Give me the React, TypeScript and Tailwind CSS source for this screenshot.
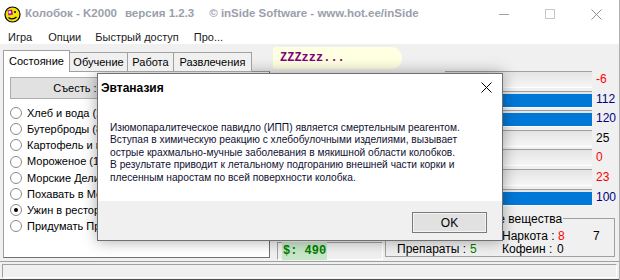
import React from 'react';

const foods = [
  'Хлеб и вода (2$)',
  'Бутерброды (8$)',
  'Картофель и мясо (12$)',
  'Мороженое (15$)',
  'Морские Деликатесы (30$)',
  'Похавать в McDonalds (40$)',
  'Ужин в ресторане (60$)',
  'Придумать Премию (100$)',
];

const stats = [
  { id: 'mood', value: -6, color: 'text-[#ff0000]' },
  { id: 'health', value: 112, color: 'text-[#000080]' },
  { id: 'food', value: 120, color: 'text-[#000080]' },
  { id: 'tired', value: 25, color: 'text-black' },
  { id: 'drunk', value: 0, color: 'text-[#ff0000]' },
  { id: 'fresh', value: 23, color: 'text-[#ff0000]' },
  { id: 'respect', value: 100, color: 'text-[#000080]' },
];

const dialogLines = [
  'Изюмопаралитеческое павидло (ИПП) является смертельным реагентом.',
  'Вступая в химическую реакцию с хлебобулочными изделиями, вызывает',
  'острые крахмально-мучные заболевания в мякишной области колобков.',
  'В результате приводит к летальному подгоранию внешней части корки и',
  'плесенным наростам по всей поверхности колобка.',
];

function KolobokIcon() {
  return (
    <svg width="17" height="17" viewBox="0 0 17 17">
      <circle cx="8.5" cy="8.5" r="7.5" fill="#f2e600" stroke="#000" strokeWidth="1.2" />
      <path d="M3.5 4.5 L8 3.5 L9 8.5 L4.5 9.5 Z" fill="#b0109a" />
      <circle cx="5.8" cy="6.3" r="1.2" fill="#fff" />
      <circle cx="11" cy="6" r="1" fill="#000" />
      <path d="M4.5 11.5 Q8.5 14.5 12.5 11" stroke="#000" strokeWidth="1.3" fill="none" />
    </svg>
  );
}

function Radio({ checked }: { checked?: boolean }) {
  return (
    <span className="w-[12px] h-[12px] rounded-full border border-[#8a8a8a] bg-white flex items-center justify-center shrink-0">
      {checked && <span className="w-[4px] h-[4px] rounded-full bg-black" />}
    </span>
  );
}

export default function App() {
  return (
    <div className="w-[620px] h-[280px] relative overflow-hidden bg-[#f0f0f0] flex flex-col border-r border-[#b0b0b0] font-['Liberation_Sans',Arial,sans-serif] text-black">
      {/* title bar */}
      <div className="h-[28px] bg-white flex items-center shrink-0">
        <div className="ml-[4px]">
          <KolobokIcon />
        </div>
        <div className="ml-[4px] text-[11.5px] font-bold text-[#9aa0ab] whitespace-pre">
          <span>Колобок - K2000</span>
          <span className="ml-[8px]">версия 1.2.3</span>
          <span className="ml-[15px]">© inSide Software - www.hot.ee/inSide</span>
        </div>
        <div className="ml-auto flex items-center h-full">
          <div className="w-[46px] h-full flex items-center justify-center">
            <svg width="10" height="10" viewBox="0 0 10 10"><path d="M0 5.5 H10" stroke="#a0a0a0" strokeWidth="1" /></svg>
          </div>
          <div className="w-[46px] h-full flex items-center justify-center">
            <svg width="10" height="10" viewBox="0 0 10 10"><rect x="0.5" y="0.5" width="9" height="9" fill="none" stroke="#c8c8c8" strokeWidth="1" /></svg>
          </div>
          <div className="w-[46px] h-full flex items-center justify-center">
            <svg width="11" height="11" viewBox="0 0 11 11"><path d="M0.5 0.5 L10.5 10.5 M10.5 0.5 L0.5 10.5" stroke="#909090" strokeWidth="1" /></svg>
          </div>
        </div>
      </div>

      {/* menu */}
      <div className="h-[16px] bg-white flex items-center text-[11px] text-[#1a1a1a] shrink-0 pt-[2px]">
        <span className="ml-[8px]">Игра</span>
        <span className="ml-[16px]">Опции</span>
        <span className="ml-[14px]">Быстрый доступ</span>
        <span className="ml-[15px]">Про...</span>
      </div>

      {/* client */}
      <div className="flex-1 flex min-h-0">
        {/* left column */}
        <div className="ml-[3px] w-[267px] flex flex-col pt-[6px] shrink-0">
          <div className="flex items-end h-[22px] text-[11px] relative z-10">
            <div className="h-[22px] w-[67px] bg-white border border-b-0 border-[#a0a0a0] flex items-center justify-center">
              Состояние
            </div>
            <div className="h-[20px] w-[59px] bg-[#f0f0f0] border border-[#a0a0a0] flex items-center justify-center -ml-px">
              Обучение
            </div>
            <div className="h-[20px] w-[47px] bg-[#f0f0f0] border border-[#a0a0a0] flex items-center justify-center -ml-px">
              Работа
            </div>
            <div className="h-[20px] w-[79px] bg-[#f0f0f0] border border-[#a0a0a0] flex items-center justify-center -ml-px">
              Развлечения
            </div>
          </div>
          <div className="-mt-px h-[187px] bg-white border border-[#a0a0a0] border-r-[#707070] border-b-[#707070] px-[6px] pt-[5px] text-[11px]">
            <div className="h-[22px] border border-[#adadad] bg-[#e1e1e1] flex items-center justify-center">
              Съесть : Ужин в ресторане (60$)
            </div>
            <div className="mt-[6px] flex flex-col">
              {foods.map((f, i) => (
                <div key={f} className="h-[16.2px] flex items-center gap-[5px]">
                  <Radio checked={i === 6} />
                  <span>{f}</span>
                </div>
              ))}
            </div>
          </div>
        </div>

        {/* right column */}
        <div className="ml-[3px] flex-1 flex flex-col pt-[3px] text-[12px]">
          <div className="w-[129px] h-[22px] bg-[#ffffe1] rounded-r-[11px] rounded-l-[3px] flex items-center pl-[7px] font-['Liberation_Mono',monospace] font-bold text-[12px] text-[#800080]">
            ZZZzzz...
          </div>
          <div className="mt-[2px] flex flex-col">
            {stats.map((s) => (
              <div key={s.id} className="h-[19.6px] flex items-start">
                <span className="w-[172px]" />
                <div className="w-[147px] h-[17px] border-t border-[#a0a0a0] border-b border-b-white bg-gradient-to-b from-[#e4e4e4] to-[#f6f6f6] pt-[2px]">
                  <div
                    className="h-[13px] bg-[#0078d7]"
                    style={{ width: `${Math.max(0, Math.min(100, s.value))}%` }}
                  />
                </div>
                <span className={`pl-[4px] leading-[14px] pt-[1px] ${s.color}`}>{s.value}</span>
              </div>
            ))}
          </div>
          <div className="mt-auto mb-[2px] flex items-end">
            <div className="ml-[4px] mb-[-1px] w-[106px] h-[18px] border border-[#a0a0a0] border-r-white border-b-white flex items-center pl-[4px]">
              <span className="bg-[#c8e6c8] text-[#008000] font-bold font-['Liberation_Mono',monospace] text-[12px] px-[1px]">$: 490</span>
            </div>
            <div className="relative ml-[2px] w-[230px] h-[39px] border border-[#a0a0a0] mb-[2px]">
              <span className="absolute left-[68px] -top-[9px] bg-[#f0f0f0] px-[1px]">Вредные вещества</span>
              <div className="absolute left-[116px] top-[8px] flex">
                <span className="w-[56px]">Наркота :</span>
                <span className="w-[35px] text-[#ff0000]">8</span>
                <span>7</span>
              </div>
              <div className="absolute left-[11px] top-[21px] flex">
                <span className="w-[73px]">Препараты :</span>
                <span className="w-[32px] text-[#008000]">5</span>
                <span className="w-[55px]">Кофеин :</span>
                <span>0</span>
              </div>
            </div>
          </div>
        </div>
      </div>

      {/* status bar */}
      <div className="h-[19px] shrink-0 border-t border-[#a0a0a0] pt-[2px] px-[2px] pb-px border-b border-b-[#505050]">
        <div className="h-full border border-[#a0a0a0] border-r-white border-b-white" />
      </div>

      {/* dialog */}
      <div className="absolute left-[97px] top-[73px] w-[406px] h-[168px] bg-white border border-[#707070] shadow-[0_0_14px_rgba(0,0,0,0.35)] flex flex-col">
        <div className="h-[27px] flex items-center pl-[3px]">
          <span className="font-bold text-[12px] text-black">Эвтаназия</span>
          <svg className="ml-auto mr-[10px]" width="11" height="11" viewBox="0 0 11 11">
            <path d="M0.5 0.5 L10.5 10.5 M10.5 0.5 L0.5 10.5" stroke="#000" strokeWidth="1" />
          </svg>
        </div>
        <div className="pl-[12px] pt-[21px] text-[10.2px] leading-[12.4px] text-[#101030] flex-1">
          {dialogLines.map((l) => (
            <div key={l} className="whitespace-nowrap">{l}</div>
          ))}
        </div>
        <div className="h-[39px] bg-[#f0f0f0] flex items-start justify-end pr-[15px] pt-[11px]">
          <div className="w-[75px] h-[21px] border border-[#7a7a7a] bg-[#e1e1e1] flex items-center justify-center text-[12px] shadow-[inset_0_0_0_1px_#f4f4f4]">
            OK
          </div>
        </div>
      </div>
    </div>
  );
}
